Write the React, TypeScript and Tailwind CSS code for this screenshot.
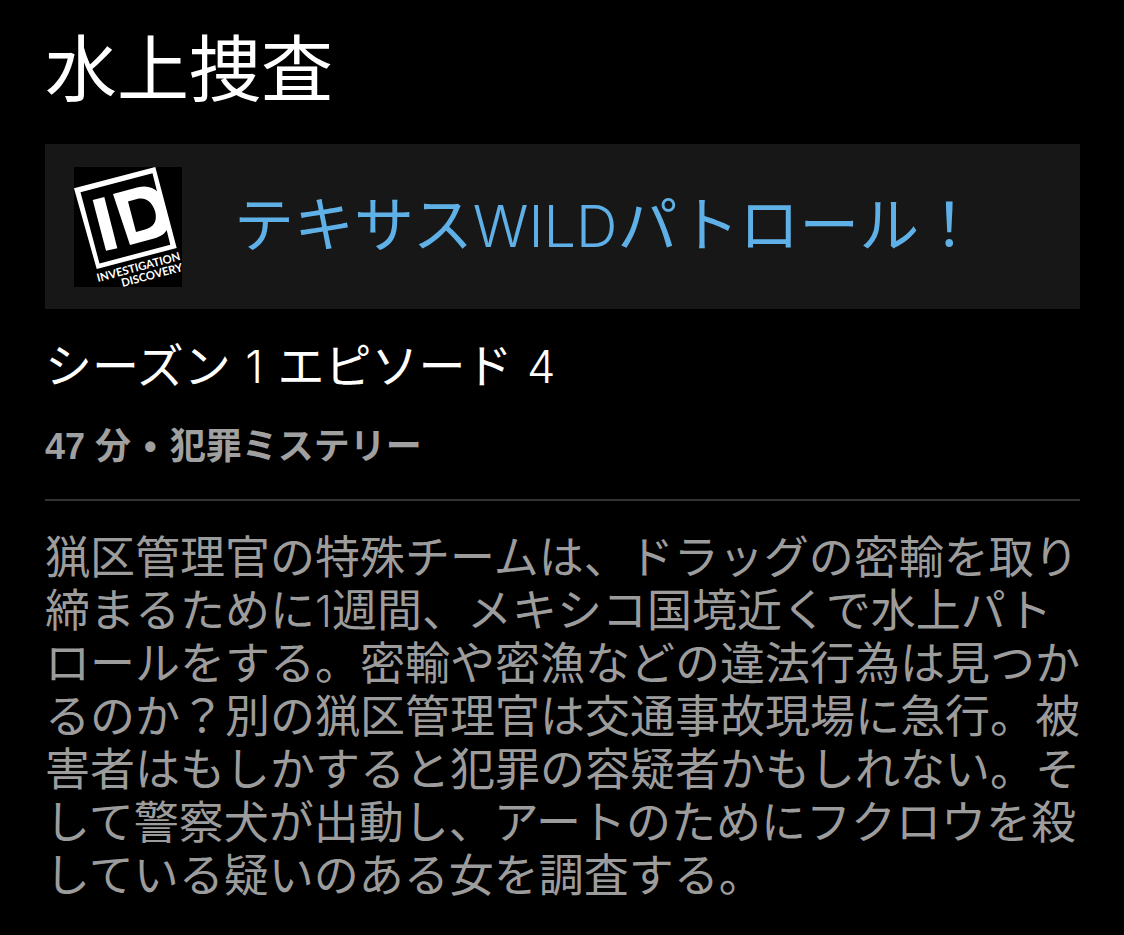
import type { ReactNode } from "react";

// Latin letters and digits are set thinner and a little smaller than the kana
function Latin({ children }: { children: ReactNode }) {
  return <span className="font-['Inter',sans-serif] text-[0.96em] leading-none font-light">{children}</span>;
}

function ChannelLogo() {
  return (
    <svg
      viewBox="0 0 108 120"
      className="h-[120px] w-[108px] shrink-0 overflow-visible"
      role="img"
      aria-label="Investigation Discovery"
    >
      <rect width="108" height="120" fill="#000" />
      <g fill="#fff" fillRule="evenodd">
        <path d="M0 21.3 81.3 0 102.7 81 22.7 102zM6.5 25.3 25.5 96.5 96.3 77.7 78.5 6.3z" />
        <path d="M18.7 33 30.3 30 43.3 81.3 32 83.8z" />
        <path d="M39 27 64 20.3C73 18 79 20.5 84 25L93.500 62C91 66.500 87 69.500 80 71.500L56 78z" />
      </g>
      <path fill="#000" d="M54 34.500 63 32C73 30 78.500 36 81.300 45 83.500 55 79 60.500 71 62.500L62 65z" />
      <g fill="#fff" fontFamily="Lato, sans-serif" fontWeight="700" fontSize="11.3">
        <text transform="translate(24 115) rotate(-15)">INVESTIGATION</text>
        <text transform="translate(48.500 120) rotate(-15)">DISCOVERY</text>
      </g>
    </svg>
  );
}

export default function App() {
  return (
    <main
      lang="ja"
      className="min-h-screen bg-black pt-4 pr-11 pb-8 pl-[45px] font-['Noto_Sans_CJK_JP',sans-serif] font-normal text-white"
    >
      <h1 className="text-[72px] leading-[96px]">水上捜査</h1>

      <a href="#series" className="mt-8 flex items-start bg-[#171717] px-[29px] pt-[23px] pb-[22px] text-[#5fb0e6]">
        <ChannelLogo />
        <span className="ml-[52px] pt-3.5 text-[60px] leading-[80px]">
          テキサス<Latin>WILD</Latin>パトロール！
        </span>
      </a>

      <h2 className="mt-[22px] text-[47px] leading-[64px]">
        シーズン <span className="mx-1"><Latin>1</Latin></span> エピソード <span className="mx-1"><Latin>4</Latin></span>
      </h2>
      <p className="mt-7 font-['Liberation_Sans','Noto_Sans_CJK_JP',sans-serif] text-[36px] leading-[48px] font-bold text-[#a0a0a0]">
        47 分 <span className="mx-[3px]">•</span> 犯罪ミステリー
      </p>

      <hr className="mt-7 border-t-2 border-[#333]" />

      <p className="mt-[27px] text-[45px] leading-[53px] text-[#9c9c9c]">
        猟区管理官の特殊チームは、ドラッグの密輸を取り締まるために<Latin>1</Latin>
        週間、メキシコ国境近くで水上パトロールをする。密輸や密漁などの違法行為は見つかるのか？別の猟区管理官は交通事故現場に急行。被害者はもしかすると犯罪の容疑者かもしれない。そして警察犬が出動し、アートのためにフクロウを殺している疑いのある女を調査する。
      </p>
    </main>
  );
}
